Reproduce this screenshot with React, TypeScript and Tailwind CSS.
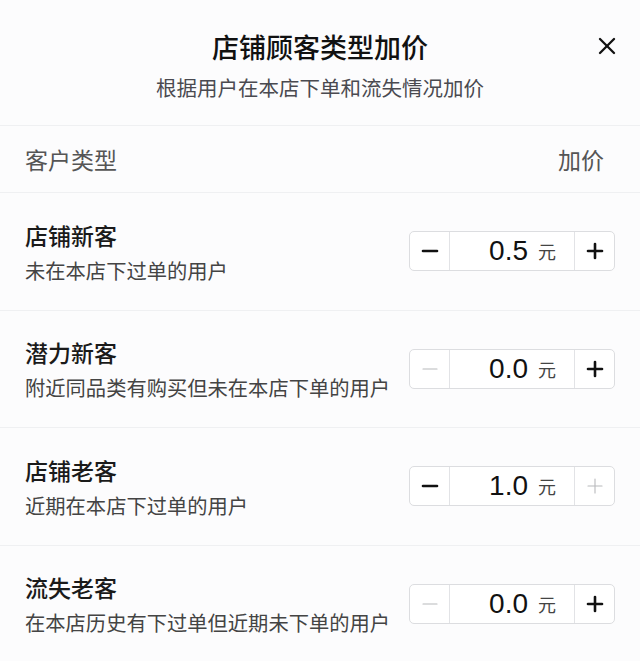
import { X, Minus, Plus } from "lucide-react";

const ROWS = [
  { name: "店铺新客", desc: "未在本店下过单的用户", value: "0.5", minus: true, plus: true },
  { name: "潜力新客", desc: "附近同品类有购买但未在本店下单的用户", value: "0.0", minus: false, plus: true },
  { name: "店铺老客", desc: "近期在本店下过单的用户", value: "1.0", minus: true, plus: false },
  { name: "流失老客", desc: "在本店历史有下过单但近期未下单的用户", value: "0.0", minus: false, plus: true },
];

const font = "font-['PingFang_SC','Noto_Sans_CJK_SC',sans-serif]";

function Stepper({ value, minus, plus }: { value: string; minus: boolean; plus: boolean }) {
  return (
    <div className="flex h-[40px] w-[206px] items-stretch rounded-[5px] border border-[#dcdde0] bg-white">
      <div className="flex w-[40px] items-center justify-center border-r border-[#e2e3e6]">
        <Minus
          size={24}
          strokeWidth={minus ? 2.6 : 1.1}
          className={minus ? "text-[#111]" : "text-[#b8b9bc]"}
        />
      </div>
      <div className="flex flex-1 items-center justify-end gap-[10px] pr-[18px]">
        <span className="font-['Liberation_Sans',sans-serif] text-[28px] leading-none text-[#111]">{value}</span>
        <span className="text-[18px] leading-none text-[#444]">元</span>
      </div>
      <div className="flex w-[40px] items-center justify-center border-l border-[#e2e3e6]">
        <Plus
          size={24}
          strokeWidth={plus ? 2.6 : 1.1}
          className={plus ? "text-[#111]" : "text-[#b8b9bc]"}
        />
      </div>
    </div>
  );
}

export default function App() {
  return (
    <div className={`${font} h-[661px] w-[640px] overflow-hidden bg-[#fcfcfd]`}>
      <div className="relative flex h-[126px] flex-col items-center border-b border-[#eff0f2] pt-[27px]">
        <h1 className="text-[27px] font-medium leading-[40px] text-[#111]">店铺顾客类型加价</h1>
        <p className="mt-[6px] text-[20.5px] leading-[28px] text-[#4a4a50]">根据用户在本店下单和流失情况加价</p>
        <X size={28} strokeWidth={2} className="absolute right-[19px] top-[32px] text-[#111]" />
      </div>
      <div className="flex h-[67px] items-center justify-between border-b border-[#eff0f2] px-[25px]">
        <span className="text-[23px] text-[#555]">客户类型</span>
        <span className="pr-[11px] text-[23px] text-[#555]">加价</span>
      </div>
      {ROWS.map((r) => (
        <div
          key={r.name}
          className="flex h-[117.5px] items-center justify-between border-b border-[#eff0f2] pl-[25px] pr-[25px]"
        >
          <div className="flex flex-col">
            <span className="text-[23px] font-medium leading-[32px] text-[#1a1a1a]">{r.name}</span>
            <span className="mt-[5px] text-[20.3px] leading-[28px] text-[#444]">{r.desc}</span>
          </div>
          <Stepper value={r.value} minus={r.minus} plus={r.plus} />
        </div>
      ))}
    </div>
  );
}
